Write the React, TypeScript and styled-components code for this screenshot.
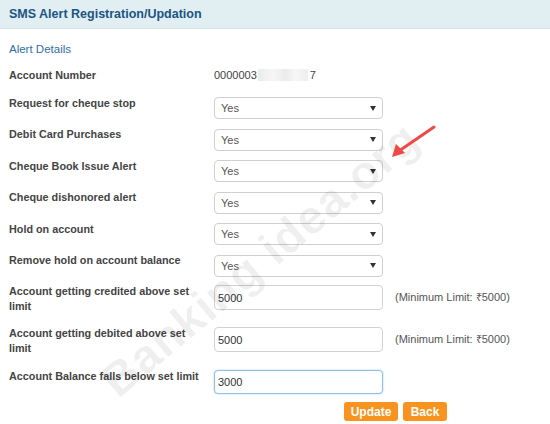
import styled, { createGlobalStyle } from 'styled-components';

const GlobalStyle = createGlobalStyle`
  html, body {
    margin: 0;
    padding: 0;
    background: #ffffff;
    font-family: Arial, "Liberation Sans", sans-serif;
  }
`;

const yesNoRows = [
  'Request for cheque stop',
  'Debit Card Purchases',
  'Cheque Book Issue Alert',
  'Cheque dishonored alert',
  'Hold on account',
  'Remove hold on account balance',
];

const limitRows = [
  { label: 'Account getting credited above set limit', value: '5000', hint: true, focus: false, gap: 13.5 },
  { label: 'Account getting debited above set limit', value: '5000', hint: true, focus: false, gap: 14.5 },
  { label: 'Account Balance falls below set limit', value: '3000', hint: false, focus: true, gap: 8 },
];

const Page = styled.div`
  position: relative;
  width: 550px;
  height: 424px;
  overflow: hidden;
  background: #fff;
`;

const Header = styled.div`
  height: 29px;
  display: flex;
  align-items: center;
  padding-left: 9px;
  background: #e1eef2;
  border-bottom: 1px solid #d6e4ea;
  box-sizing: border-box;
  font-size: 12.5px;
  font-weight: bold;
  color: #1b5584;
`;

const Section = styled.div`
  padding: 12.5px 9px 0 9px;
`;

const SectionTitle = styled.div`
  font-size: 11.5px;
  line-height: 15px;
  color: #2f6ea8;
  margin-bottom: 12.5px;
`;

const Row = styled.div<{ $gap?: number }>`
  display: grid;
  grid-template-columns: 205px 169px auto;
  align-items: start;
  margin-bottom: ${(p) => (p.$gap ?? 9.5)}px;
`;

const Label = styled.div`
  font-size: 10.8px;
  font-weight: bold;
  line-height: 15px;
  color: #444;
  margin-top: -1.5px;
  padding-right: 4px;
`;

const Value = styled.div`
  font-size: 11px;
  line-height: 15px;
  color: #444;
  margin-top: -1.5px;
  display: flex;
  align-items: center;
`;

const Blur = styled.span`
  display: inline-block;
  width: 50px;
  height: 12px;
  margin: 0 2px 0 1px;
  background: linear-gradient(90deg, #ececec, #f6f6f6 30%, #ebebeb 55%, #f7f7f7 75%, #eeeeee);
`;

const SelectBox = styled.div`
  height: 22px;
  box-sizing: border-box;
  border: 1px solid #cfcfcf;
  border-radius: 4px;
  display: flex;
  align-items: center;
  justify-content: space-between;
  padding: 0 6px 0 6px;
  font-size: 11px;
  color: #555;
  background: #fff;
`;

const Caret = styled.span`
  width: 0;
  height: 0;
  border-left: 3.5px solid transparent;
  border-right: 3.5px solid transparent;
  border-top: 5px solid #333;
`;

const InputBox = styled.div<{ $focus?: boolean }>`
  height: ${(p) => (p.$focus ? 24 : 25)}px;
  box-sizing: border-box;
  border: 1px solid ${(p) => (p.$focus ? '#8ec1ea' : '#d2d2d2')};
  box-shadow: ${(p) => (p.$focus ? '0 0 2px rgba(102,175,233,0.6)' : 'none')};
  border-radius: 4px;
  display: flex;
  align-items: center;
  padding-left: 3px;
  font-size: 11px;
  color: #333;
  background: #fff;
`;

const Hint = styled.div`
  font-size: 11px;
  line-height: 25px;
  color: #555;
  padding-left: 12px;
  white-space: nowrap;
`;

const Buttons = styled.div`
  display: flex;
  gap: 5px;
  padding-left: 335px;
`;

const Button = styled.button<{ $w: number }>`
  width: ${(p) => p.$w}px;
  height: 19px;
  border: none;
  border-radius: 3px;
  background: #f7931e;
  color: #fff;
  font-family: Arial, "Liberation Sans", sans-serif;
  font-size: 12px;
  font-weight: bold;
  padding: 0;
`;

const Watermark = styled.div`
  position: absolute;
  left: 108px;
  top: 360px;
  transform: rotate(-40deg);
  transform-origin: left center;
  font-size: 47px;
  line-height: 54px;
  font-weight: bold;
  letter-spacing: 1px;
  color: rgba(0, 0, 0, 0.065);
  white-space: nowrap;
  pointer-events: none;
`;

const Arrow = styled.svg`
  position: absolute;
  left: 385px;
  top: 121px;
  pointer-events: none;
`;

export default function App() {
  return (
    <Page>
      <GlobalStyle />
      <Header>SMS Alert Registration/Updation</Header>
      <Section>
        <SectionTitle>Alert Details</SectionTitle>
        <Row $gap={14.5}>
          <Label>Account Number</Label>
          <Value>
            0000003<Blur />7
          </Value>
        </Row>
        {yesNoRows.map((label, i) => (
          <Row key={label} $gap={i === yesNoRows.length - 1 ? 8.5 : 9.5}>
            <Label>{label}</Label>
            <SelectBox>
              Yes
              <Caret />
            </SelectBox>
          </Row>
        ))}
        {limitRows.map((row) => (
          <Row key={row.label} $gap={row.gap}>
            <Label>{row.label}</Label>
            <InputBox $focus={row.focus}>{row.value}</InputBox>
            {row.hint && <Hint>(Minimum Limit: ₹5000)</Hint>}
          </Row>
        ))}
        <Buttons>
          <Button $w={54}>Update</Button>
          <Button $w={44}>Back</Button>
        </Buttons>
      </Section>
      <Watermark>Banking idea.org</Watermark>
      <Arrow width="60" height="45" viewBox="0 0 60 45">
        <line x1="49" y1="6" x2="14" y2="30" stroke="#ef4a45" strokeWidth="3" strokeLinecap="round" />
        <polygon points="7,36 11,23 20,32" fill="#ef4a45" />
      </Arrow>
    </Page>
  );
}
